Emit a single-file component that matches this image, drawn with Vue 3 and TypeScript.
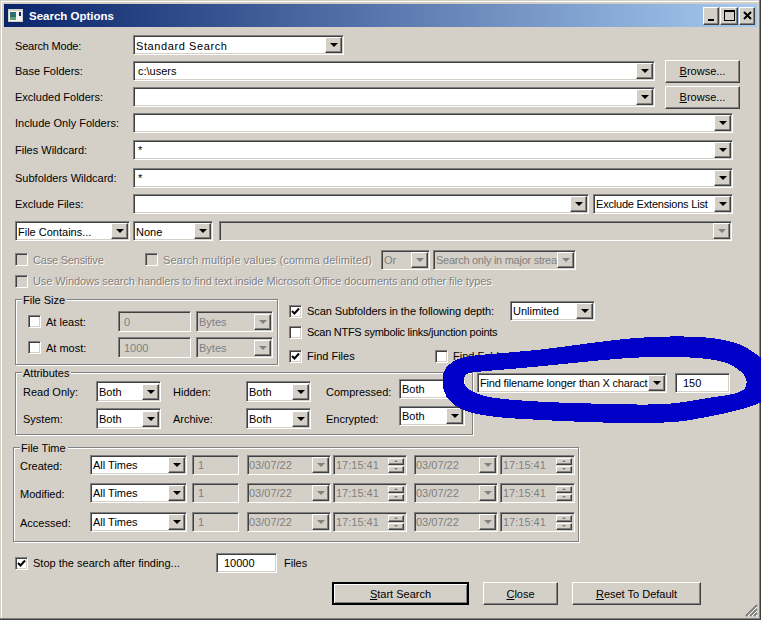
<script setup lang="ts">
type Pt = [number, number];

// closed curve through the midpoints of the hand-drawn marker outline
function smooth(pts: Pt[]): string {
  const mid = (a: Pt, b: Pt): Pt => [(a[0] + b[0]) / 2, (a[1] + b[1]) / 2];
  const start = mid(pts[pts.length - 1], pts[0]);
  let d = `M${start[0]} ${start[1]}`;
  pts.forEach((p, i) => {
    const m = mid(p, pts[(i + 1) % pts.length]);
    d += ` Q${p[0]} ${p[1]} ${m[0]} ${m[1]}`;
  });
  return d + "Z";
}

const outer: Pt[] = [
  [442, 380], [445, 367], [460, 357], [490, 354], [540, 350], [590, 343], [640, 337],
  [700, 336], [737, 342], [757, 354], [775, 370], [775, 395], [761, 403], [740, 410],
  [707, 417], [673, 423], [607, 423], [540, 420], [490, 417], [460, 410], [445, 397],
];
const inner: Pt[] = [
  [463, 384], [465, 374], [473, 372], [523, 368], [573, 363], [623, 358], [673, 356],
  [723, 360], [743, 372], [748, 383], [742, 393], [707, 398], [667, 405], [607, 404],
  [540, 402], [490, 398], [472, 392],
];
const scribble = smooth(outer) + smooth(inner);

const folderRows = ["Base Folders:", "Excluded Folders:"];
const attrRows = [
  { a: "Read Only:", b: "Hidden:", c: "Compressed:" },
  { a: "System:", b: "Archive:", c: "Encrypted:" },
];
const timeRows = ["Created:", "Modified:", "Accessed:"];
const sizeRows = [
  { label: "At least:", value: "0" },
  { label: "At most:", value: "1000" },
];
</script>

<template>
  <div class="window">
    <div class="titlebar">
      <svg class="app-icon" width="15" height="13" viewBox="0 0 15 13">
        <rect x="0" y="0" width="15" height="13" fill="#d4d0c8" />
        <rect x="1" y="2" width="13" height="10" fill="#f4f4f4" />
        <rect x="2" y="3" width="6" height="8" fill="#2f6f72" />
        <rect x="2" y="8" width="6" height="3" fill="#5fa07a" />
        <rect x="11" y="3" width="2" height="4" fill="#0a246a" />
      </svg>
      <span class="title">Search Options</span>
      <div class="caption-btns">
        <span class="cap raised"><i class="cap-min"></i></span>
        <span class="cap cap-wide raised"><i class="cap-max"></i></span>
        <span class="cap raised">
          <svg width="9" height="9" viewBox="0 0 9 9"><path d="M1 1l7 7M8 1l-7 7" stroke="#000" stroke-width="2" /></svg>
        </span>
      </div>
    </div>

    <div class="form">
      <div class="row drop-1">
        <span class="lbl tight-2">Search Mode:</span>
        <div class="combo w-211"><span class="val val-wide">Standard Search</span><span class="arrow raised"><i></i></span></div>
      </div>
      <div v-for="name in folderRows" :key="name" class="row mt-6">
        <span class="lbl">{{ name }}</span>
        <div class="combo w-522"><span class="val val-edit">{{ name === "Base Folders:" ? "c:\\users" : "" }}</span><span class="arrow raised"><i></i></span></div>
        <button class="btn w-75 ml-10 raised"><u>B</u>rowse...</button>
      </div>
      <div class="row mt-6">
        <span class="lbl">Include Only Folders:</span>
        <div class="combo w-600"><span class="val"></span><span class="arrow raised"><i></i></span></div>
      </div>
      <div class="row mt-7">
        <span class="lbl">Files Wildcard:</span>
        <div class="combo w-600"><span class="val val-edit">*</span><span class="arrow raised"><i></i></span></div>
      </div>
      <div class="row mt-8">
        <span class="lbl">Subfolders Wildcard:</span>
        <div class="combo w-600"><span class="val val-edit">*</span><span class="arrow raised"><i></i></span></div>
      </div>
      <div class="row mt-6">
        <span class="lbl">Exclude Files:</span>
        <div class="combo w-456"><span class="val"></span><span class="arrow raised"><i></i></span></div>
        <div class="combo w-140 ml-4"><span class="val tight-2">Exclude Extensions List</span><span class="arrow raised"><i></i></span></div>
      </div>
      <div class="row mt-7 drop-1">
        <div class="combo w-115"><span class="val">File Contains...</span><span class="arrow raised"><i></i></span></div>
        <div class="combo w-80 ml-3"><span class="val">None</span><span class="arrow raised"><i></i></span></div>
        <div class="combo off w-513 ml-6"><span class="val"></span><span class="arrow raised"><i></i></span></div>
      </div>
      <div class="row row-21 mt-8">
        <label class="check off w-130"><span class="box"></span><span class="dim tight-2">Case Sensitive</span></label>
        <label class="check off w-236"><span class="box"></span><span class="dim wide-1">Search multiple values (comma delimited)</span></label>
        <div class="combo off w-49"><span class="val">Or</span><span class="arrow raised"><i></i></span></div>
        <div class="combo off w-143 ml-3"><span class="val tight-3">Search only in major strea</span><span class="arrow raised"><i></i></span></div>
      </div>
      <div class="row row-16 mt-3">
        <label class="check off"><span class="box"></span><span class="dim tight-1">Use Windows search handlers to find text inside Microsoft Office documents and other file types</span></label>
      </div>

      <div class="middle">
        <div class="group size-group">
          <span class="legend">File Size</span>
          <div v-for="row in sizeRows" :key="row.label" class="size-row">
            <label class="check w-90"><span class="box"></span>{{ row.label }}</label>
            <div class="field off w-73">{{ row.value }}</div>
            <div class="combo off w-77 ml-5"><span class="val">Bytes</span><span class="arrow raised"><i></i></span></div>
          </div>
        </div>
        <div class="scan">
          <div class="row">
            <label class="check w-221 tight-1"><span class="box">
              <svg width="9" height="9" viewBox="0 0 9 9"><path d="M1 4l2.5 2.5L8 1.5" fill="none" stroke="#000" stroke-width="2" /></svg>
            </span>Scan Subfolders in the following depth:</label>
            <div class="combo w-85"><span class="val">Unlimited</span><span class="arrow raised"><i></i></span></div>
          </div>
          <div class="row row-16 mt-3">
            <label class="check tight-3"><span class="box"></span>Scan NTFS symbolic links/junction points</label>
          </div>
          <div class="row row-16 mt-8">
            <label class="check w-146"><span class="box">
              <svg width="9" height="9" viewBox="0 0 9 9"><path d="M1 4l2.5 2.5L8 1.5" fill="none" stroke="#000" stroke-width="2" /></svg>
            </span>Find Files</label>
            <label class="check"><span class="box"></span>Find Folders</label>
          </div>
        </div>
      </div>

      <div class="attr-line">
        <div class="group attr-group">
          <span class="legend">Attributes</span>
          <div v-for="row in attrRows" :key="row.a" class="attr-row">
            <span class="attr-lbl">{{ row.a }}</span>
            <div class="combo w-65"><span class="val">Both</span><span class="arrow raised"><i></i></span></div>
            <span class="attr-lbl ml-12">{{ row.b }}</span>
            <div class="combo w-65"><span class="val">Both</span><span class="arrow raised"><i></i></span></div>
            <span class="attr-lbl ml-15">{{ row.c }}</span>
            <div class="combo w-66 attr-last"><span class="val">Both</span><span class="arrow raised"><i></i></span></div>
          </div>
        </div>
        <div class="combo w-190 ml-4 long"><span class="val tight-4">Find filename longer than X charact</span><span class="arrow raised"><i></i></span></div>
        <div class="field w-55 ml-8 long val-num">150</div>
      </div>

      <div class="group time-group">
        <span class="legend">File Time</span>
        <div v-for="name in timeRows" :key="name" class="time-row">
          <span class="time-lbl">{{ name }}</span>
          <div class="combo w-97"><span class="val">All Times</span><span class="arrow raised"><i></i></span></div>
          <div class="field off w-47 ml-5">1</div>
          <div class="combo off date w-84 ml-8"><span class="val">03/07/22</span><span class="arrow raised"><i></i></span></div>
          <div class="clock w-74 ml-2"><span class="val">17:15:41</span><span class="spin"><b class="raised up"></b><b class="raised down"></b></span></div>
          <div class="combo off date w-84 ml-7"><span class="val">03/07/22</span><span class="arrow raised"><i></i></span></div>
          <div class="clock w-75 ml-2"><span class="val">17:15:41</span><span class="spin"><b class="raised up"></b><b class="raised down"></b></span></div>
        </div>
      </div>

      <div class="row stop-row">
        <label class="check w-201"><span class="box">
          <svg width="9" height="9" viewBox="0 0 9 9"><path d="M1 4l2.5 2.5L8 1.5" fill="none" stroke="#000" stroke-width="2" /></svg>
        </span>Stop the search after finding...</label>
        <div class="field w-61 val-num">10000</div>
        <span class="files">Files</span>
      </div>

      <div class="actions">
        <button class="btn btn-default w-137 raised"><u>S</u>tart Search</button>
        <button class="btn w-75 raised"><u>C</u>lose</button>
        <button class="btn w-129 raised"><u>R</u>eset To Default</button>
      </div>
    </div>

    <svg class="grip" width="13" height="13" viewBox="0 0 13 13">
      <path d="M12 1L1 12M12 5L5 12M12 9L9 12" stroke="#808080" stroke-width="2" />
      <path d="M12 3L3 12M12 7L7 12M12 11L11 12" stroke="#fff" stroke-width="1" />
    </svg>

    <svg class="marker" width="761" height="620" viewBox="0 0 761 620" shape-rendering="crispEdges">
      <path :d="scribble" fill="#0000c8" fill-rule="evenodd" />
    </svg>
  </div>
</template>

<style>
html,
body {
  margin: 0;
  background: #d4d0c8;
}
</style>

<style scoped>
.window {
  position: relative;
  width: 761px;
  height: 620px;
  box-sizing: border-box;
  padding: 4px;
  overflow: hidden;
  background: #d4d0c8;
  box-shadow: inset -1px -1px #404040, inset -2px -2px #808080, inset 1px 1px #d4d0c8, inset 2px 2px #fff;
  font: 11px "Liberation Sans", Arial, sans-serif;
  color: #000;
}

.titlebar {
  display: flex;
  align-items: center;
  height: 23px;
  width: 753px;
  padding-left: 4px;
  box-sizing: border-box;
  background: linear-gradient(90deg, #0a246a, #a6caf0);
}

.title {
  margin-left: 6px;
  color: #fff;
  font-size: 11.5px;
  font-weight: 700;
}

.caption-btns {
  display: flex;
  margin-left: auto;
  margin-right: 2px;
  gap: 1px;
}

.cap {
  display: flex;
  align-items: center;
  justify-content: center;
  width: 16px;
  height: 18px;
  box-sizing: border-box;
}

.cap-wide {
  width: 18px;
}

.cap-min {
  width: 6px;
  height: 2px;
  margin-top: 8px;
  background: #000;
}

.cap-max {
  width: 9px;
  height: 8px;
  border: 1px solid #000;
  border-top-width: 2px;
}

.raised {
  background-color: #d4d0c8;
  border: 1px solid;
  border-color: #fff #404040 #404040 #fff;
  box-shadow: inset -1px -1px #808080;
}

.form {
  padding: 8px 0 0 11px;
}

.row {
  display: flex;
  align-items: center;
  height: 20px;
}

.row-21 { height: 21px; }
.row-16 { height: 16px; }

.drop-1 .lbl,
.drop-1 .val {
  padding-top: 2px;
}

.lbl {
  width: 118px;
  flex: none;
  box-sizing: border-box;
}

.combo,
.field,
.clock {
  display: flex;
  align-items: center;
  flex: none;
  height: 20px;
  box-sizing: border-box;
  background: #fff;
  border: 1px solid;
  border-color: #808080 #fff #fff #808080;
  box-shadow: inset 1px 1px #404040, inset -1px -1px #d4d0c8;
}

.combo.off,
.field.off,
.clock {
  background: #d4d0c8;
  color: #808080;
}

.val {
  flex: 1;
  min-width: 0;
  padding-left: 2px;
  overflow: hidden;
  white-space: nowrap;
}

.val-wide {
  letter-spacing: 0.6px;
}

.val-edit {
  padding-left: 4px;
}

.field {
  padding-left: 5px;
}

.val-num {
  padding-left: 7px;
}

.arrow {
  display: flex;
  align-items: center;
  justify-content: center;
  flex: none;
  width: 17px;
  height: 16px;
  margin-right: 1px;
  box-sizing: border-box;
}

.arrow i {
  width: 0;
  height: 0;
  border: 4px solid transparent;
  border-top-color: #000;
  border-bottom-width: 0;
}

.off .arrow i {
  border-top-color: #808080;
}

.date .val {
  padding-left: 1px;
}

.clock .val {
  padding-left: 2px;
}

.spin {
  display: flex;
  flex-direction: column;
  gap: 1px;
  margin-right: 2px;
}

.spin b {
  display: flex;
  align-items: center;
  justify-content: center;
  width: 16px;
  height: 7px;
  box-sizing: border-box;
}

.spin b::after {
  content: "";
  border: 2px solid transparent;
}

.spin .up::after {
  border-bottom-color: #808080;
  border-top-width: 0;
}

.spin .down::after {
  border-top-color: #808080;
  border-bottom-width: 0;
}

.check {
  display: flex;
  align-items: center;
  flex: none;
  white-space: nowrap;
}

.box {
  display: flex;
  align-items: center;
  justify-content: center;
  flex: none;
  width: 13px;
  height: 13px;
  margin-right: 5px;
  box-sizing: border-box;
  background: #fff;
  border: 1px solid;
  border-color: #808080 #fff #fff #808080;
  box-shadow: inset 1px 1px #404040, inset -1px -1px #d4d0c8;
}

.check.off .box {
  background: #d4d0c8;
}

.dim {
  color: #808080;
  text-shadow: 1px 1px #fff;
}

.middle {
  display: flex;
  margin-top: 10px;
  height: 66px;
}

.group {
  position: relative;
  box-sizing: border-box;
  border: 1px solid #808080;
  box-shadow: 1px 1px #fff, inset 1px 1px #fff;
}

.legend {
  position: absolute;
  top: -7px;
  left: 6px;
  padding: 0 2px 0 1px;
  line-height: 15px;
  background: #d4d0c8;
}

.size-group {
  width: 263px;
  padding: 11px 0 0 12px;
}

.size-row {
  display: flex;
  align-items: center;
  height: 21px;
  margin-bottom: 5px;
}

.size-row .combo,
.size-row .field {
  height: 21px;
}

.scan {
  margin-left: 11px;
  padding-top: 2px;
}

.attr-line {
  display: flex;
  margin-top: 7px;
}

.attr-group {
  width: 458px;
  height: 63px;
  padding: 8px 0 0 7px;
}

.attr-row {
  display: flex;
  align-items: center;
  height: 21px;
  margin-bottom: 6px;
}

.attr-row .combo {
  height: 21px;
}

.attr-row .attr-last {
  align-self: flex-start;
  height: 20px;
  margin-top: -2px;
}

.attr-lbl {
  width: 73px;
  flex: none;
}

.long {
  margin-top: 1px;
}

.time-group {
  width: 566px;
  height: 95px;
  margin: 12px 0 0 -2px;
  padding: 7px 0 0 6px;
}

.time-row {
  display: flex;
  align-items: center;
  height: 20px;
  margin-bottom: 8px;
}

.time-row:nth-child(3) {
  margin-bottom: 9px;
}

.time-lbl {
  width: 70px;
  flex: none;
  padding-top: 1px;
  box-sizing: border-box;
}

.stop-row {
  margin-top: 11px;
}

.files {
  margin-left: 7px;
}

.actions {
  display: flex;
  gap: 14px;
  margin: 9px 0 0 317px;
}

.btn {
  flex: none;
  height: 23px;
  padding: 0;
  box-sizing: border-box;
  font: inherit;
  color: #000;
}

.btn-default {
  border: 2px solid #000;
  box-shadow: inset 1px 1px #fff, inset -1px -1px #808080;
}

.grip {
  position: absolute;
  right: 3px;
  bottom: 3px;
}

.marker {
  position: absolute;
  top: 0;
  left: 0;
  pointer-events: none;
}

.wide-1 { letter-spacing: 0.12px; }
.tight-1 { letter-spacing: -0.08px; }
.tight-2 { letter-spacing: -0.2px; }
.tight-3 { letter-spacing: -0.27px; }
.tight-4 { letter-spacing: -0.18px; }

.w-47 { width: 47px; }
.w-49 { width: 49px; }
.w-55 { width: 55px; }
.w-61 { width: 61px; }
.w-65 { width: 65px; }
.w-66 { width: 66px; }
.w-73 { width: 73px; }
.w-74 { width: 74px; }
.w-75 { width: 75px; }
.w-77 { width: 77px; }
.w-80 { width: 80px; }
.w-84 { width: 84px; }
.w-85 { width: 85px; }
.w-90 { width: 90px; }
.w-97 { width: 97px; }
.w-115 { width: 115px; }
.w-129 { width: 129px; }
.w-130 { width: 130px; }
.w-137 { width: 137px; }
.w-140 { width: 140px; }
.w-143 { width: 143px; }
.w-146 { width: 146px; }
.w-190 { width: 190px; }
.w-201 { width: 201px; }
.w-211 { width: 211px; }
.w-221 { width: 221px; }
.w-236 { width: 236px; }
.w-456 { width: 456px; }
.w-513 { width: 513px; }
.w-522 { width: 522px; }
.w-600 { width: 600px; }

.ml-2 { margin-left: 2px; }
.ml-3 { margin-left: 3px; }
.ml-4 { margin-left: 4px; }
.ml-5 { margin-left: 5px; }
.ml-6 { margin-left: 6px; }
.ml-7 { margin-left: 7px; }
.ml-8 { margin-left: 8px; }
.ml-10 { margin-left: 10px; }
.ml-12 { margin-left: 12px; }
.ml-15 { margin-left: 15px; }

.mt-3 { margin-top: 3px; }
.mt-6 { margin-top: 6px; }
.mt-7 { margin-top: 7px; }
.mt-8 { margin-top: 8px; }
</style>
